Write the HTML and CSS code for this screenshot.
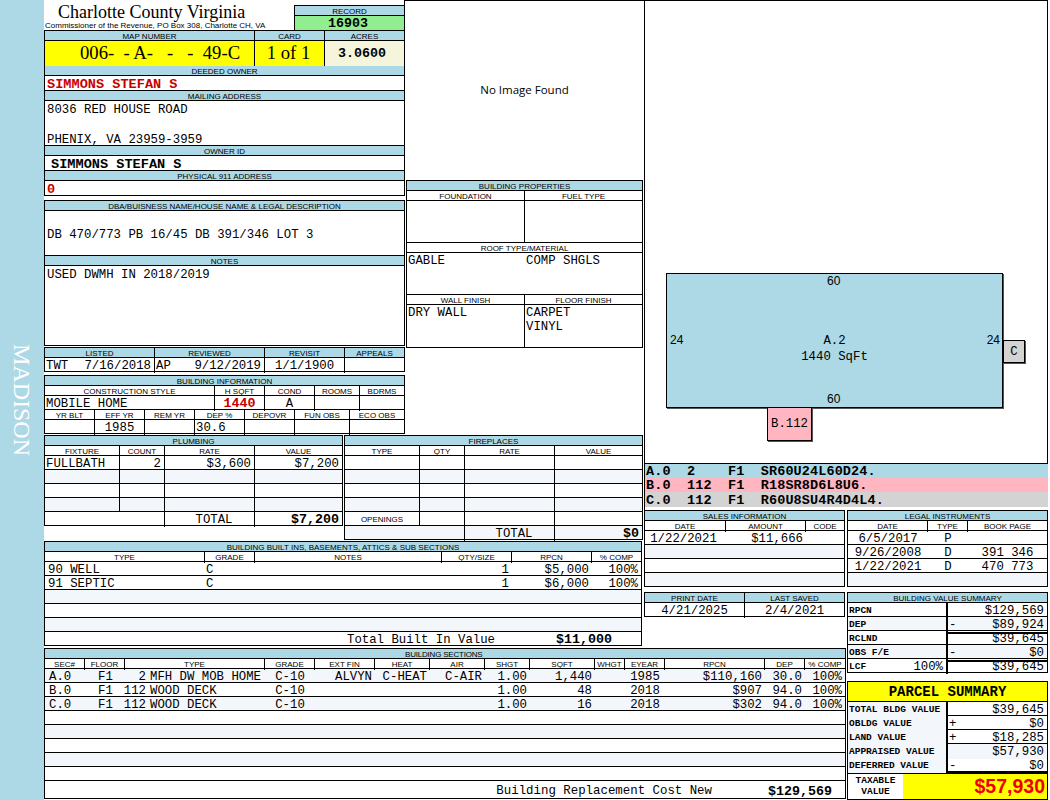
FILE: index.html
```html
<!DOCTYPE html>
<html lang="en">
<head>
    <meta charset="UTF-8">
    <meta name="viewport" content="width=device-width, initial-scale=1.0">
    <title>Charlotte County Virginia</title>
    <link rel="stylesheet" href="styles.css">
</head>
<body>
    <div class="strip"><span class="district">MADISON</span></div>

    <div class="sheet">
        <!-- left side: owner, properties, plumbing, built ins -->
        <div class="upper">
            <div class="upper-top">
                <div class="col-owner">
                    <div class="title-bar">
                        <div class="title-text">
                            <div class="county">Charlotte County Virginia</div>
                            <div class="office">Commissioner of the Revenue, PO Box 308, Charlotte CH, VA</div>
                        </div>
                        <div class="record">
                            <div class="head">RECORD</div>
                            <div class="record-no">16903</div>
                        </div>
                    </div>

                    <div class="box">
                        <div class="row g-map head-row">
                            <div class="cell">MAP NUMBER</div><div class="cell">CARD</div><div class="cell">ACRES</div>
                        </div>
                        <div class="row g-map map-values">
                            <div class="cell map-no">006-  - A-   -   -  49-C</div>
                            <div class="cell card-no">1 of 1</div>
                            <div class="cell acres">3.0600</div>
                        </div>
                        <div class="head">DEEDED OWNER</div>
                        <div class="line owner-red">SIMMONS STEFAN S</div>
                        <div class="head">MAILING ADDRESS</div>
                        <div class="line address">8036 RED HOUSE ROAD<br>&nbsp;<br>PHENIX, VA 23959-3959</div>
                        <div class="head">OWNER ID</div>
                        <div class="line owner-id">SIMMONS STEFAN S</div>
                        <div class="head">PHYSICAL 911 ADDRESS</div>
                        <div class="line owner-red">0</div>
                    </div>

                    <div class="box legal-box">
                        <div class="head">DBA/BUISNESS NAME/HOUSE NAME &amp; LEGAL DESCRIPTION</div>
                        <div class="line legal-text">DB 470/773 PB 16/45 DB 391/346 LOT 3</div>
                        <div class="head">NOTES</div>
                        <div class="line notes-text">USED DWMH IN 2018/2019</div>
                    </div>

                    <div class="box dates-box">
                        <div class="row g-dates head-row blue">
                            <div class="cell">LISTED</div><div class="cell">REVIEWED</div><div class="cell">REVISIT</div><div class="cell">APPEALS</div>
                        </div>
                        <div class="row g-dates val-row">
                            <div class="cell split"><span>TWT</span><span>7/16/2018</span></div>
                            <div class="cell split"><span>AP</span><span>9/12/2019</span></div>
                            <div class="cell mid">1/1/1900</div>
                            <div class="cell"></div>
                        </div>
                    </div>

                    <div class="box info-box">
                        <div class="head">BUILDING INFORMATION</div>
                        <div class="row g-info head-row white">
                            <div class="cell">CONSTRUCTION STYLE</div><div class="cell">H SQFT</div><div class="cell">COND</div><div class="cell">ROOMS</div><div class="cell">BDRMS</div>
                        </div>
                        <div class="row g-info val-row">
                            <div class="cell">MOBILE HOME</div><div class="cell mid hsqft">1440</div><div class="cell mid">A</div><div class="cell"></div><div class="cell"></div>
                        </div>
                        <div class="row g-info2 head-row white">
                            <div class="cell">YR BLT</div><div class="cell">EFF YR</div><div class="cell">REM YR</div><div class="cell">DEP %</div><div class="cell">DEPOVR</div><div class="cell">FUN OBS</div><div class="cell">ECO OBS</div>
                        </div>
                        <div class="row g-info2 val-row">
                            <div class="cell"></div><div class="cell mid">1985</div><div class="cell"></div><div class="cell">30.6</div><div class="cell"></div><div class="cell"></div><div class="cell"></div>
                        </div>
                    </div>
                </div>

                <div class="col-props">
                    <div class="no-image">No Image Found</div>
                    <div class="box props-box">
                        <div class="head">BUILDING PROPERTIES</div>
                        <div class="row g-props head-row white">
                            <div class="cell">FOUNDATION</div><div class="cell">FUEL TYPE</div>
                        </div>
                        <div class="row g-props prop-values">
                            <div class="cell"></div><div class="cell"></div>
                        </div>
                        <div class="head white">ROOF TYPE/MATERIAL</div>
                        <div class="row g-props prop-values">
                            <div class="cell no-rule">GABLE</div><div class="cell">COMP SHGLS</div>
                        </div>
                        <div class="row g-props head-row white">
                            <div class="cell">WALL FINISH</div><div class="cell">FLOOR FINISH</div>
                        </div>
                        <div class="row g-props prop-values">
                            <div class="cell">DRY WALL</div><div class="cell">CARPET<br>VINYL</div>
                        </div>
                    </div>
                </div>
            </div>

            <div class="upper-mid">
                <div class="box plumbing">
                    <div class="head">PLUMBING</div>
                    <div class="row g-plumb head-row white">
                        <div class="cell">FIXTURE</div><div class="cell">COUNT</div><div class="cell">RATE</div><div class="cell">VALUE</div>
                    </div>
                    <div class="row g-plumb val-row">
                        <div class="cell">FULLBATH</div><div class="cell right">2</div><div class="cell right">$3,600</div><div class="cell right">$7,200</div>
                    </div>
                    <div class="row g-plumb val-row alt"><div class="cell"></div><div class="cell"></div><div class="cell"></div><div class="cell"></div></div>
                    <div class="row g-plumb val-row"><div class="cell"></div><div class="cell"></div><div class="cell"></div><div class="cell"></div></div>
                    <div class="row g-plumb val-row alt"><div class="cell"></div><div class="cell"></div><div class="cell"></div><div class="cell"></div></div>
                    <div class="row g-total val-row">
                        <div class="cell"></div><div class="cell total-label">TOTAL</div><div class="cell right strong">$7,200</div>
                    </div>
                </div>

                <div class="box fireplaces">
                    <div class="head">FIREPLACES</div>
                    <div class="row g-plumb head-row white">
                        <div class="cell">TYPE</div><div class="cell">QTY</div><div class="cell">RATE</div><div class="cell">VALUE</div>
                    </div>
                    <div class="row g-plumb val-row"><div class="cell"></div><div class="cell"></div><div class="cell"></div><div class="cell"></div></div>
                    <div class="row g-plumb val-row alt"><div class="cell"></div><div class="cell"></div><div class="cell"></div><div class="cell"></div></div>
                    <div class="row g-plumb val-row"><div class="cell"></div><div class="cell"></div><div class="cell"></div><div class="cell"></div></div>
                    <div class="row g-plumb val-row alt"><div class="cell"></div><div class="cell"></div><div class="cell"></div><div class="cell"></div></div>
                    <div class="row g-plumb val-row">
                        <div class="cell openings">OPENINGS</div><div class="cell"></div><div class="cell"></div><div class="cell"></div>
                    </div>
                    <div class="row g-total val-row alt">
                        <div class="cell"></div><div class="cell total-label">TOTAL</div><div class="cell right strong">$0</div>
                    </div>
                </div>
            </div>

            <div class="box builtins">
                <div class="head">BUILDING BUILT INS, BASEMENTS, ATTICS &amp; SUB SECTIONS</div>
                <div class="row g-built head-row white">
                    <div class="cell">TYPE</div><div class="cell">GRADE</div><div class="cell">NOTES</div><div class="cell">QTY/SIZE</div><div class="cell">RPCN</div><div class="cell">% COMP</div>
                </div>
                <div class="row g-built val-row plain">
                    <div class="cell built-type">90 WELL</div><div class="cell">C</div><div class="cell"></div><div class="cell right">1</div><div class="cell right">$5,000</div><div class="cell right">100%</div>
                </div>
                <div class="row g-built val-row plain">
                    <div class="cell built-type">91 SEPTIC</div><div class="cell">C</div><div class="cell"></div><div class="cell right">1</div><div class="cell right">$6,000</div><div class="cell right">100%</div>
                </div>
                <div class="row val-row alt"></div>
                <div class="row val-row"></div>
                <div class="row val-row alt"></div>
                <div class="row val-row sum-row built-sum">
                    <span>Total Built In Value</span><span class="strong">$11,000</span>
                </div>
            </div>
        </div>

        <!-- sketch of the building, free canvas -->
        <div class="sketch-area">
            <div class="sketch">
                <div class="shape shape-a">
                    <span class="dim dim-top">60</span>
                    <span class="dim dim-left">24</span>
                    <span class="dim dim-right">24</span>
                    <span class="dim dim-bottom">60</span>
                    <span class="shape-name">A.2<br>1440 SqFt</span>
                </div>
                <div class="shape shape-b">B.112</div>
                <div class="shape shape-c">C</div>
            </div>
            <div class="legend">
                <div class="legend-row leg-a">A.0  2    F1  SR60U24L60D24.</div>
                <div class="legend-row leg-b">B.0  112  F1  R18SR8D6L8U6.</div>
                <div class="legend-row leg-c">C.0  112  F1  R60U8SU4R4D4L4.</div>
            </div>
        </div>

        <div class="sales-col">
            <div class="box">
                <div class="head">SALES INFORMATION</div>
                <div class="row g-sales head-row white">
                    <div class="cell">DATE</div><div class="cell">AMOUNT</div><div class="cell">CODE</div>
                </div>
                <div class="row g-sales val-row plain">
                    <div class="cell mid sale-date">1/22/2021</div><div class="cell right">$11,666</div><div class="cell"></div>
                </div>
                <div class="row val-row alt"></div>
                <div class="row val-row"></div>
                <div class="row val-row alt"></div>
            </div>
            <div class="box print-box">
                <div class="row g-print head-row blue">
                    <div class="cell">PRINT DATE</div><div class="cell">LAST SAVED</div>
                </div>
                <div class="row g-print val-row">
                    <div class="cell mid">4/21/2025</div><div class="cell mid">2/4/2021</div>
                </div>
            </div>
        </div>

        <div class="summary-col">
            <div class="box">
                <div class="head">LEGAL INSTRUMENTS</div>
                <div class="row g-legal head-row white">
                    <div class="cell">DATE</div><div class="cell">TYPE</div><div class="cell">BOOK PAGE</div>
                </div>
                <div class="row g-legal val-row plain">
                    <div class="cell mid">6/5/2017</div><div class="cell mid">P</div><div class="cell"></div>
                </div>
                <div class="row g-legal val-row plain">
                    <div class="cell mid">9/26/2008</div><div class="cell mid">D</div><div class="cell mid">391 346</div>
                </div>
                <div class="row g-legal val-row plain">
                    <div class="cell mid">1/22/2021</div><div class="cell mid">D</div><div class="cell mid">470 773</div>
                </div>
                <div class="row val-row alt"></div>
            </div>

            <div class="box value-box">
                <div class="head">BUILDING VALUE SUMMARY</div>
                <div class="row g-value val-row">
                    <div class="cell tag">RPCN</div><div class="cell right">$129,569</div>
                </div>
                <div class="row g-value val-row alt">
                    <div class="cell tag">DEP</div><div class="cell split heavy"><span>-</span><span>$89,924</span></div>
                </div>
                <div class="row g-value val-row">
                    <div class="cell tag">RCLND</div><div class="cell right">$39,645</div>
                </div>
                <div class="row g-value val-row alt">
                    <div class="cell tag">OBS F/E</div><div class="cell split heavy"><span>-</span><span>$0</span></div>
                </div>
                <div class="row g-value val-row">
                    <div class="cell tag split"><span>LCF</span><span class="lcf">100%</span></div><div class="cell right">$39,645</div>
                </div>
            </div>

            <div class="box parcel-box">
                <div class="parcel-title">PARCEL SUMMARY</div>
                <div class="row g-value val-row">
                    <div class="cell tag alt">TOTAL BLDG VALUE</div><div class="cell right">$39,645</div>
                </div>
                <div class="row g-value val-row">
                    <div class="cell tag alt">OBLDG VALUE</div><div class="cell split"><span>+</span><span>$0</span></div>
                </div>
                <div class="row g-value val-row">
                    <div class="cell tag alt">LAND VALUE</div><div class="cell split heavy"><span>+</span><span>$18,285</span></div>
                </div>
                <div class="row g-value val-row">
                    <div class="cell tag alt">APPRAISED VALUE</div><div class="cell right alt">$57,930</div>
                </div>
                <div class="row g-value val-row deferred">
                    <div class="cell tag alt">DEFERRED VALUE</div><div class="cell split"><span>-</span><span>$0</span></div>
                </div>
                <div class="taxable">
                    <div class="taxable-label">TAXABLE<br>VALUE</div>
                    <div class="taxable-value">$57,930</div>
                </div>
            </div>
        </div>

        <!-- building sections table runs under both left columns -->
        <div class="box sections">
            <div class="head left-head"><span>BUILDING SECTIONS</span></div>
            <div class="row g-sect head-row white">
                <div class="cell">SEC#</div><div class="cell">FLOOR</div><div class="cell">TYPE</div><div class="cell">GRADE</div><div class="cell">EXT FIN</div><div class="cell">HEAT</div><div class="cell">AIR</div><div class="cell">SHGT</div><div class="cell">SQFT</div><div class="cell">WHGT</div><div class="cell">EYEAR</div><div class="cell">RPCN</div><div class="cell">DEP</div><div class="cell">% COMP</div>
            </div>
            <div class="row g-sect-data val-row plain alt">
                <div class="cell sec">A.0</div><div class="cell floor">F1</div><div class="cell sec-num">2</div><div class="cell sec-type">MFH DW MOB HOME</div><div class="cell mid">C-10</div><div class="cell right">ALVYN</div><div class="cell right">C-HEAT</div><div class="cell right">C-AIR</div><div class="cell right">1.00</div><div class="cell right">1,440</div><div class="cell"></div><div class="cell mid">1985</div><div class="cell right">$110,160</div><div class="cell right">30.0</div><div class="cell right">100%</div>
            </div>
            <div class="row g-sect-data val-row plain">
                <div class="cell sec">B.0</div><div class="cell floor">F1</div><div class="cell sec-num">112</div><div class="cell sec-type">WOOD DECK</div><div class="cell mid">C-10</div><div class="cell"></div><div class="cell"></div><div class="cell"></div><div class="cell right">1.00</div><div class="cell right">48</div><div class="cell"></div><div class="cell mid">2018</div><div class="cell right">$907</div><div class="cell right">94.0</div><div class="cell right">100%</div>
            </div>
            <div class="row g-sect-data val-row plain alt">
                <div class="cell sec">C.0</div><div class="cell floor">F1</div><div class="cell sec-num">112</div><div class="cell sec-type">WOOD DECK</div><div class="cell mid">C-10</div><div class="cell"></div><div class="cell"></div><div class="cell"></div><div class="cell right">1.00</div><div class="cell right">16</div><div class="cell"></div><div class="cell mid">2018</div><div class="cell right">$302</div><div class="cell right">94.0</div><div class="cell right">100%</div>
            </div>
            <div class="row val-row"></div>
            <div class="row val-row alt"></div>
            <div class="row val-row"></div>
            <div class="row val-row alt"></div>
            <div class="row val-row"></div>
            <div class="row sect-sum sum-row">
                <span>Building Replacement Cost New</span><span class="strong">$129,569</span>
            </div>
        </div>
    </div>
</body>
</html>
```

FILE: styles.css
```css
*{ margin: 0; padding: 0; box-sizing: border-box;}
body{ display: flex; width: 1050px; height: 800px; overflow: hidden; background: #fff; color: #000; font: 12.33px/14px "Liberation Mono", monospace;}

.strip{ width: 44px; flex: none; background: lightblue; display: flex; align-items: center; justify-content: center;}
.district{ writing-mode: vertical-rl; color: #fff; font: 24px/24px "Liberation Serif", serif;}

/* page grid */
.sheet{ flex: 1; display: grid; grid-template-columns: 600px 203px 203px; grid-template-rows: 510px 138px 152px;}
.upper{ grid-column: 1; grid-row: 1 / 3;}
.sketch-area{ grid-column: 2 / 4; grid-row: 1; display: flex; flex-direction: column;}
.sales-col{ grid-column: 2; grid-row: 2;}
.summary-col{ grid-column: 3; grid-row: 2 / 4;}
.sections{ grid-column: 1 / 3; grid-row: 3; width: 802px; height: 151px;}

/* shared table bits */
.box{ border: 1px solid #000;}
.head{ height: 10px; background: lightblue; border-bottom: 1px solid #000; font: 8px/11px "Liberation Sans", sans-serif; text-align: center;}
.head.white{ background: #fff;}
.row{ display: grid; border-bottom: 1px solid #000;}
.box > .row:last-child{ border-bottom: 0;}
.cell{ border-right: 1px solid #000; padding: 0 1px; white-space: pre;}
.cell:last-child{ border-right: 0;}
.head-row{ height: 10px; background: lightblue;}
.head-row .cell{ font: 8px/11px "Liberation Sans", sans-serif; text-align: center;}
.head-row.white{ background: #fff;}
.val-row{ height: 14px;}
.val-row .cell{ padding-top: 1px;}
.box > .val-row:last-child{ height: 13px;}
.val-row.plain .cell{ border-right: 0;}
.alt{ background: #f3f6fb;}
.mid{ text-align: center;}
.val-row .right{ text-align: right; padding-right: 3px;}
.split{ display: flex; justify-content: space-between; padding-right: 3px;}
.strong{ font-weight: bold; font-size: 13.33px;}

.g-map{ grid-template-columns: 210px 70px 1fr;}
.g-dates{ grid-template-columns: 110px 110px 80px 1fr;}
.g-info{ grid-template-columns: 170px 50px 50px 45px 1fr;}
.g-info2{ grid-template-columns: 50px 50px 50px 50px 50px 55px 1fr;}
.g-props{ grid-template-columns: 118px 1fr;}
.g-plumb{ grid-template-columns: 75px 45px 90px 1fr;}
.g-total{ grid-template-columns: 120px 90px 1fr;}
.g-built{ grid-template-columns: 160px 50px 187px 70px 80px 1fr;}
.g-sales{ grid-template-columns: 81px 80px 1fr;}
.g-print{ grid-template-columns: 100px 1fr;}
.g-legal{ grid-template-columns: 80px 40px 1fr;}
.g-value{ grid-template-columns: 100px 1fr;}
.g-sect{ grid-template-columns: 40px 40px 140px 50px 60px 55px 55px 45px 65px 30px 40px 100px 40px 1fr;}
.g-sect-data{ grid-template-columns: 40px 36px 25px 119px 50px 60px 55px 55px 45px 65px 30px 40px 100px 40px 1fr;}

/* owner column */
.upper-top{ display: flex; height: 435px;}
.col-owner{ width: 361px;}
.title-bar{ display: flex; justify-content: space-between; height: 30px;}
.title-text{ padding-left: 1px;}
.county{ font: 18px/20px "Liberation Serif", serif; padding: 2px 0 0 13px;}
.office{ font: 8px/8px "Liberation Sans", sans-serif; white-space: nowrap;}
.record{ width: 111px; margin-top: 5px; border: 1px solid #000; border-bottom: 0;}
.record-no{ height: 14px; background: lightgreen; font-weight: bold; font-size: 13.33px; line-height: 16px; text-align: center; padding-right: 3px;}
.map-values{ height: 25px;}
.map-no, .card-no{ background: yellow; font: 18.67px/24px "Liberation Serif", serif;}
.map-no{ padding-left: 35px;}
.card-no{ text-align: center; padding-right: 3px;}
.acres{ background: beige; font-weight: bold; font-size: 13.33px; line-height: 25px; text-align: center; padding-right: 6px;}
.line{ height: 15px; border-bottom: 1px solid #000; padding: 2px 0 0 2px;}
.box > .line:last-child{ height: 14px; border-bottom: 0;}
.owner-red{ color: #c80000; font-weight: bold; font-size: 13.6px; line-height: 13px;}
.address{ height: 45px; line-height: 15px;}
.owner-id{ font-weight: bold; font-size: 13.6px; line-height: 13px; padding-left: 6px;}
.legal-box{ margin-top: 4px;}
.legal-text{ height: 45px; line-height: 45px;}
.box > .notes-text:last-child{ height: 79px;}
.dates-box{ margin-top: 1px;}
.info-box{ margin-top: 3px;}
.hsqft{ color: #c80000; font-weight: bold; font-size: 13.33px;}

/* properties column */
.col-props{ width: 239px;}
.no-image{ width: 240px; height: 180px; margin-left: -1px; border: 1px solid #000; border-width: 1px 0 0 1px; padding-top: 81px; font: 11.5px/16px "Open Sans", sans-serif; text-align: center;}
.props-box{ width: 237px; margin-left: 1px;}
.prop-values{ height: 42px;}
.prop-values .cell{ padding-top: 1px;}
.box > .prop-values:last-child{ height: 42px;}
.no-rule{ border-right: 0;}

/* plumbing and fireplaces */
.upper-mid{ display: flex; align-items: flex-start; gap: 1px; height: 106px;}
.plumbing, .fireplaces{ width: 299px;}
.total-label{ text-align: center; padding-left: 10px;}
.openings{ font: 8px/13px "Liberation Sans", sans-serif; text-align: center;}
.builtins{ width: 598px;}
.built-type{ padding-left: 3px;}
.sum-row{ display: flex; justify-content: flex-end; padding-top: 1px;}
.built-sum{ gap: 61px; padding-right: 29px;}

/* sketch */
.sketch{ position: relative; width: 404px; height: 463px; border: 1px solid #000; border-bottom: 0;}
.shape{ position: absolute; border: 1px solid #000; box-shadow: 1px 1px 0 #555; display: flex; align-items: center; justify-content: center; line-height: 16px;}
.shape-a{ left: 21px; top: 272px; width: 337px; height: 135px; background: lightblue; padding-top: 16px;}
.shape-b{ left: 122px; top: 406px; width: 45px; height: 34px; background: lightpink;}
.shape-c{ left: 358px; top: 339px; width: 22px; height: 23px; background: lightgray;}
.shape-name{ text-align: center;}
.dim{ position: absolute; font: 12px/14px "Liberation Sans", sans-serif;}
.dim-top{ top: 0; left: 160px;}
.dim-bottom{ top: 118px; left: 160px;}
.dim-left{ top: 59px; left: 3px;}
.dim-right{ top: 59px; right: 2px;}
.legend{ width: 404px; height: 47px; border: 1px solid #000; border-width: 1px 0 0 1px;}
.legend-row{ height: 15px; padding: 1px 0 0 1px; font-weight: bold; font-size: 13.5px; letter-spacing: .1px; line-height: 16px; white-space: pre;}
.leg-a{ height: 13px; padding-top: 0; background: lightblue;}
.leg-b{ background: lightpink;}
.leg-c{ background: lightgray;}

/* sales, legal, value summary */
.sales-col .box{ width: 201px;}
.sale-date{ padding-right: 5px;}
.print-box{ margin-top: 5px;}
.summary-col .box{ width: 201px;}
.value-box{ margin-top: 5px;}
.tag.cell{ font-size: 9.5px; font-weight: bold; padding-left: 1px; border-right-width: 2px;}
.lcf{ font-size: 12.33px; font-weight: normal;}
.heavy{ border-bottom: 2px solid #000;}
.parcel-box{ margin-top: 8px;}
.parcel-title{ height: 20px; background: yellow; border-bottom: 1px solid #000; font-weight: bold; font-size: 14px; line-height: 20px; text-align: center; white-space: pre;}
.box > .deferred{ height: 16px; border-bottom: 3px solid #000;}
.taxable{ display: flex; height: 25px;}
.taxable-label{ width: 55px; font-size: 9.5px; font-weight: bold; line-height: 11px; text-align: center; padding-top: 1px;}
.taxable-value{ flex: 1; background: yellow; color: #e00; font: bold 19.5px/24px "Liberation Sans", sans-serif; text-align: right; padding-right: 2px;}

/* sections */
.left-head{ text-align: left;}
.left-head span{ margin-left: 360px; letter-spacing: -.2px;}
.val-row .sec{ padding-left: 4px;}
.val-row .floor{ padding-left: 13px;}
.val-row .sec-num{ text-align: right; padding-right: 0;}
.val-row .sec-type{ padding-left: 4px;}
.sect-sum{ height: 18px; gap: 56px; padding: 4px 13px 0 0; font-size: 12.4px; line-height: 13px;}
```
